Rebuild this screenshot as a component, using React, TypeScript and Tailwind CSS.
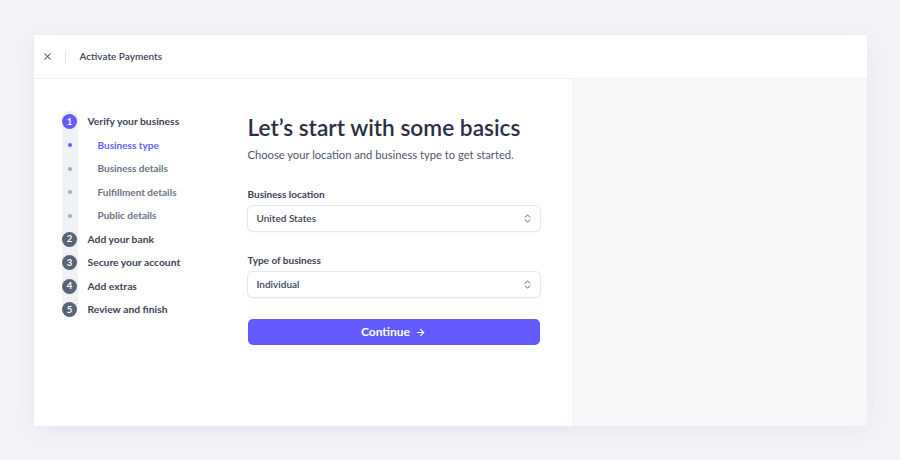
import { ArrowRight, ChevronsUpDown, X } from "lucide-react";

const subSteps = ["Business type", "Business details", "Fulfillment details", "Public details"];
const steps = ["Add your bank", "Secure your account", "Add extras", "Review and finish"];

function Select({ value }: { value: string }) {
  return (
    <div className="flex h-[25px] items-center justify-between rounded-[5px] bg-white pl-[9px] pr-[7px] shadow-[0_0_0_1px_#e3e6ec,0_1px_2px_rgba(0,0,0,0.08)]">
      <span className="text-[10px] font-semibold text-[#3c4257]">{value}</span>
      <ChevronsUpDown className="h-[11px] w-[11px] text-[#4f566b]" strokeWidth={2} />
    </div>
  );
}

export default function App() {
  return (
    <div className="flex h-[460px] w-[900px] items-start justify-center bg-[#f3f4f8] pt-[35px] font-['Lato',sans-serif]">
      <div className="flex h-[391px] w-[833px] flex-col bg-white shadow-[0_4px_24px_rgba(60,66,87,0.08)]">
        <header className="flex h-[44px] shrink-0 items-center border-b border-[#f0f1f4] pl-[8px]">
          <X className="h-[11px] w-[11px] text-[#3c4257]" strokeWidth={2.2} />
          <div className="ml-[12px] h-[14px] w-px bg-[#e3e6ec]" />
          <span className="ml-[14px] text-[10px] font-semibold text-[#3c4257]">Activate Payments</span>
        </header>

        <div className="flex flex-1">
          <div className="flex flex-1 pl-[28px] pt-[31px]">
            <nav className="relative w-[186px]">
              <div className="absolute left-0 top-[1px] h-[202px] w-[16px] rounded-full bg-[#f0f1f5]" />
              <ul className="relative">
                <li className="flex h-[23.5px] items-center">
                  <span className="ml-[0.5px] flex h-[15px] w-[15px] items-center justify-center rounded-full bg-[#635bff] text-[9.5px] font-bold text-white">1</span>
                  <span className="ml-[10.5px] text-[10.3px] font-bold text-[#3c4257]">Verify your business</span>
                </li>
                {subSteps.map((s, i) => (
                  <li key={s} className="flex h-[23.5px] items-center">
                    <span className={`ml-[6px] h-[4px] w-[4px] rounded-full ${i === 0 ? "bg-[#635bff]" : "bg-[#a3acb9]"}`} />
                    <span className={`ml-[26px] text-[10px] font-bold ${i === 0 ? "text-[#635bff]" : "text-[#697386]"}`}>{s}</span>
                  </li>
                ))}
                {steps.map((s, i) => (
                  <li key={s} className="flex h-[23.5px] items-center">
                    <span className="ml-[0.5px] flex h-[15px] w-[15px] items-center justify-center rounded-full bg-[#5b6376] text-[9.5px] font-bold text-white">{i + 2}</span>
                    <span className="ml-[10.5px] text-[10.3px] font-bold text-[#3c4257]">{s}</span>
                  </li>
                ))}
              </ul>
            </nav>

            <main className="w-[292px]">
              <h1 className="mt-[3px] whitespace-nowrap text-[22.7px] leading-[30px] font-semibold text-[#2a2f45]">Let’s start with some basics</h1>
              <p className="mt-[3px] whitespace-nowrap text-[11.2px] leading-[18px] text-[#4f566b]">Choose your location and business type to get started.</p>

              <label className="mt-[22px] block text-[10px] leading-[16px] font-bold text-[#3c4257]">Business location</label>
              <div className="mt-[4px]">
                <Select value="United States" />
              </div>

              <label className="mt-[21px] block text-[10px] leading-[16px] font-bold text-[#3c4257]">Type of business</label>
              <div className="mt-[4px]">
                <Select value="Individual" />
              </div>

              <button className="mt-[22px] flex h-[26px] w-full items-center justify-center gap-[5px] rounded-[5px] bg-[#635bff] text-[12px] font-bold text-white">
                Continue
                <ArrowRight className="h-[11px] w-[11px]" strokeWidth={2.4} />
              </button>
            </main>
          </div>
          <aside className="w-[295px] bg-[#f6f7f9]" />
        </div>
      </div>
    </div>
  );
}
